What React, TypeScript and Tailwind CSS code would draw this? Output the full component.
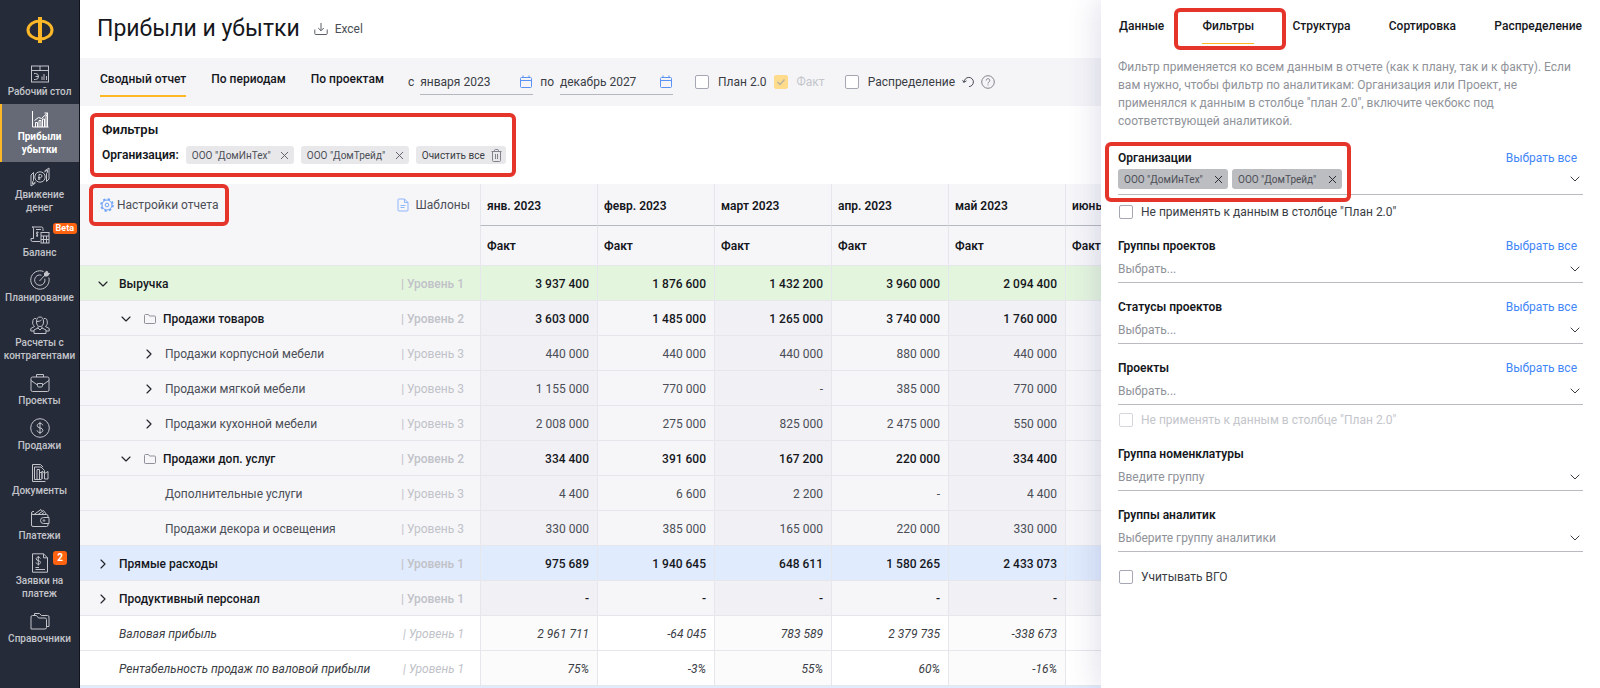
import { useState } from "react";
import type { ReactNode } from "react";
import { ChevronDown, ChevronRight, X } from "lucide-react";

interface MenuItem {
  label: string[];
  icon: ReactNode;
  active?: boolean;
  badge?: string;
}

interface Row {
  title: string;
  level: number;
  values: string[];
  kind: "income" | "group" | "item" | "expense" | "section" | "total";
  open?: boolean;
  folder?: boolean;
  arrow?: boolean;
}

const menu: MenuItem[] = [
  {
    label: ["Рабочий стол"],
    icon: (
      <>
        <rect x="1.5" y="2" width="17" height="16" />
        <path d="M1.5 6.5h17M10 2v4.500M4 9.500h1.500a3 3 0 013 3M4 15.500h1.500a3 3 0 003-3M5.500 12.500h3M12 12.500v3.500M14 10v6M16.500 12v4" />
      </>
    ),
  },
  {
    label: ["Прибыли", "убытки"],
    active: true,
    icon: (
      <>
        <path d="M2.5 2v16h16" />
        <path d="M5.5 18v-4.500h2V18M9 18v-6.500h2V18M12.500 18V10h2v8M16 18V6.500h1.500V18" />
        <path d="M4.5 11.500l4-3 3 1L17.500 4M14.500 4h3v2.500" />
      </>
    ),
  },
  {
    label: ["Движение", "денег"],
    icon: (
      <>
        <circle cx="10" cy="10" r="5.2" />
        <path d="M9 13V7.500h1.500a1.500 1.500 0 010 3H8M8 12h2.500" />
        <path d="M3.500 9v4.500L2.500 15v2l3-2M1 8l2.500-2.500V9M1 8v11l4.500-3M16.500 11V6.500l1-1.500V3l-3 2M19 12l-2.500 2.500V11M19 12V1l-4.500 3" />
      </>
    ),
  },
  {
    label: ["Баланс"],
    badge: "Beta",
    icon: (
      <>
        <path d="M10 16.500H2.500A1.500 1.500 0 011 15v-1.500h2.500V3.500A1.500 1.500 0 002 2h9.500A1.500 1.500 0 0113 3.500V6M3.500 13.500V3.500M6 4.500h5" />
        <path d="M8.500 7.500c-2-.8-3 .8-1.500 1.600s1 2.200-1 1.600M7.200 6.500v5.500" />
        <rect x="11" y="7.500" width="8" height="10.500" />
        <path d="M11 11h8M13.500 11v7M16.500 11v7M11 14.500h8" />
      </>
    ),
  },
  {
    label: ["Планирование"],
    icon: (
      <>
        <path d="M13.500 1.500a9.200 9.200 0 105.300 6" />
        <path d="M11.500 5.200a5.200 5.200 0 103.300 3.500" />
        <path d="M9.500 11l5.500-6" />
        <path d="M14.500 5.500V3l2.500-2 .5 2 2 .5-2 2.500h-3z" fill="currentColor" />
      </>
    ),
  },
  {
    label: ["Расчеты с", "контрагентами"],
    icon: (
      <>
        <path d="M6.500 7c0-3.500 1-5 3.500-5s3.500 1.500 3.500 5c0 3-1.500 4.500-3.500 4.500S6.500 10 6.500 7z" />
        <path d="M8 11.500V13l-4 2v3.500h12V15l-4-2v-1.500M8 13l2 2 2-2" />
        <path d="M6 3.500C4 3 2.500 4.500 2.800 7c-.8 1.500.7 3.500 1.700 4.500L.8 13.500V16H4M14 3.500c2-.5 3.500 1 3.200 3.500.8 1.500-.7 3.500-1.700 4.500l3.700 2V16H16M6.500 6.500c2 0 4-.5 5-1.500" />
      </>
    ),
  },
  {
    label: ["Проекты"],
    icon: (
      <>
        <rect x="1" y="4" width="18" height="14.5" rx="1.5" />
        <path d="M6.500 4V1.500h7V4M1 7.500l6.500 4.500M19 7.500L12.500 12M7.500 10.500h5v2.200a1.300 1.300 0 01-1.300 1.300H8.800a1.300 1.300 0 01-1.300-1.300z" />
      </>
    ),
  },
  {
    label: ["Продажи"],
    icon: (
      <>
        <circle cx="10" cy="10" r="9.3" />
        <path d="M12.800 7.300C12.500 6 11.500 5.500 10 5.500c-1.700 0-2.800.8-2.800 2.100 0 3.100 5.700 1.500 5.700 4.700 0 1.400-1.200 2.200-2.900 2.200-1.600 0-2.800-.8-3-2.200M10 3.800v12.400" />
      </>
    ),
  },
  {
    label: ["Документы"],
    icon: (
      <>
        <path d="M15.500 18.500h-13v-17h8l2.500 2.500M4.500 4v12.500h7M4.500 4h6.500l3.500 3.500V10" />
        <path d="M7 16V6.500h2.500V16M9.500 9.500h2.500V16M12 16V8l2.500 2v6M14.500 10.500l3.500-2V16h-3.500" />
      </>
    ),
  },
  {
    label: ["Платежи"],
    icon: (
      <>
        <path d="M18 9V8a1.500 1.500 0 00-1.500-1.500H3a1.500 1.500 0 010-3h1M1.500 5v12A1.500 1.500 0 003 18.500h13.500A1.500 1.500 0 0018 17v-1.500" />
        <path d="M13.500 9.500h5.500v6h-5.500a3 3 0 010-6z" />
        <circle cx="14" cy="12.5" r=".8" />
        <path d="M4 6.500l7-5 1.500 2M8 6.500l5.500-4 3 4M11.500 6.500l2.500-2" />
      </>
    ),
  },
  {
    label: ["Заявки на", "платеж"],
    badge: "2",
    icon: (
      <>
        <path d="M2.500.8h11l4 4v14.400h-15zM13.500.8v4h4" />
        <path d="M10.500 5.500C10.200 4.600 9.300 4.200 8.300 4.200 7 4.200 6.200 4.900 6.200 5.900c0 2.200 4.300 1.200 4.300 3.500 0 1.100-.9 1.800-2.200 1.800-1.200 0-2-.6-2.300-1.700M8.300 3v9.500M5.500 14.500H9M5.500 16.500h9.500" />
      </>
    ),
  },
  {
    label: ["Справочники"],
    icon: (
      <>
        <path d="M1 18V6a1.500 1.500 0 011.500-1.500h4L8.500 7H15a1.500 1.500 0 011.500 1.500v8A1.500 1.500 0 0115 18z" />
        <path d="M4.500 4.500v-2h5l2 2h6A1.500 1.500 0 0119 6v9.500h-2" />
      </>
    ),
  },
];

const months = ["янв. 2023", "февр. 2023", "март 2023", "апр. 2023", "май 2023", "июнь 2023"];

const rows: Row[] = [
  { title: "Выручка", level: 1, kind: "income", arrow: true, open: true, values: ["3 937 400", "1 876 600", "1 432 200", "3 960 000", "2 094 400", ""] },
  { title: "Продажи товаров", level: 2, kind: "group", arrow: true, open: true, folder: true, values: ["3 603 000", "1 485 000", "1 265 000", "3 740 000", "1 760 000", ""] },
  { title: "Продажи корпусной мебели", level: 3, kind: "item", arrow: true, values: ["440 000", "440 000", "440 000", "880 000", "440 000", ""] },
  { title: "Продажи мягкой мебели", level: 3, kind: "item", arrow: true, values: ["1 155 000", "770 000", "-", "385 000", "770 000", ""] },
  { title: "Продажи кухонной мебели", level: 3, kind: "item", arrow: true, values: ["2 008 000", "275 000", "825 000", "2 475 000", "550 000", ""] },
  { title: "Продажи доп. услуг", level: 2, kind: "group", arrow: true, open: true, folder: true, values: ["334 400", "391 600", "167 200", "220 000", "334 400", ""] },
  { title: "Дополнительные услуги", level: 3, kind: "item", values: ["4 400", "6 600", "2 200", "-", "4 400", ""] },
  { title: "Продажи декора и освещения", level: 3, kind: "item", values: ["330 000", "385 000", "165 000", "220 000", "330 000", ""] },
  { title: "Прямые расходы", level: 1, kind: "expense", arrow: true, values: ["975 689", "1 940 645", "648 611", "1 580 265", "2 433 073", ""] },
  { title: "Продуктивный персонал", level: 1, kind: "section", arrow: true, values: ["-", "-", "-", "-", "-", ""] },
  { title: "Валовая прибыль", level: 1, kind: "total", values: ["2 961 711", "-64 045", "783 589", "2 379 735", "-338 673", ""] },
  { title: "Рентабельность продаж по валовой прибыли", level: 1, kind: "total", values: ["75%", "-3%", "55%", "60%", "-16%", ""] },
];

const rowStyle = {
  income: "bg-[#e4f5de] font-medium text-[#15171c]",
  group: "bg-[#f6f6f9] font-medium text-[#15171c]",
  item: "bg-[#f6f6f9] text-[#4b4e56]",
  expense: "bg-[#e0ebfd] font-medium text-[#15171c]",
  section: "bg-[#f6f6f9] font-medium text-[#15171c]",
  total: "bg-white italic text-[#3a3d44]",
};

const stripe = {
  income: "",
  group: "bg-[#f0f0f5]",
  item: "bg-[#f0f0f5]",
  expense: "",
  section: "bg-[#f0f0f5]",
  total: "bg-[#fbfbfc]",
};

const indent: Record<number, string> = { 1: "pl-[14px]", 2: "pl-[37px]", 3: "pl-[60px]" };

function Highlight({ className }: { className: string }) {
  return <span aria-hidden="true" className={`pointer-events-none absolute z-10 rounded-md border-4 border-[#e5352b] ${className}`} />;
}

function Check({ label, checked = false, disabled = false, className = "" }: { label: string; checked?: boolean; disabled?: boolean; className?: string }) {
  const [on, setOn] = useState(checked);
  return (
    <label className={`flex items-center ${disabled ? "text-[#c3c5cb]" : "text-[#3a3d44]"} ${className}`}>
      <span className="relative flex">
        <input
          type="checkbox"
          checked={on}
          disabled={disabled}
          onChange={(e) => setOn(e.target.checked)}
          className="size-[14px] appearance-none rounded-[2px] border border-[#a5a8b2] bg-white checked:border-[#ffdc8c] checked:bg-[#ffdc8c] disabled:border-[#d5d7dc] disabled:checked:border-[#ffdc8c]"
        />
        {on && (
          <svg viewBox="0 0 14 14" className="pointer-events-none absolute inset-0 size-[14px]" fill="none" stroke="#b9b3a3" strokeWidth="1.5">
            <path d="M3.500 7l2.500 2.500 4.500-5" />
          </svg>
        )}
      </span>
      {label}
    </label>
  );
}

function Chip({ name, dark = false }: { name: string; dark?: boolean }) {
  return (
    <span className={`flex items-center justify-between whitespace-nowrap rounded-[3px] pl-[6px] pr-[3px] text-[10px] text-[#4b4e56] ${dark ? "h-5 w-[110px] bg-[#bcbdc1]" : "h-[18px] w-[108px] bg-[#e8e8eb]"}`}>
      {name}
      <button type="button" aria-label={`Убрать ${name}`} className={dark ? "text-[#22252c]" : "text-[#5b5e66]"}>
        <X size={13} strokeWidth={1.75} />
      </button>
    </span>
  );
}

function DateField({ label, value }: { label: string; value: string }) {
  return (
    <label className="flex items-center gap-[6px] text-[#3a3d44]">
      {label}
      <span className="flex h-[26px] w-[113px] items-center border-b border-[#b5b8bf]">
        <input defaultValue={value} className="w-full min-w-0 flex-1 bg-transparent outline-none" />
        <svg viewBox="0 0 14 14" className="size-[14px] shrink-0" fill="none" stroke="#5b93f5">
          <rect x="1.5" y="2.5" width="11" height="10" rx="1" />
          <path d="M1.500 5.500h11M4 .5v2M10 .5v2" />
        </svg>
      </span>
    </label>
  );
}

function Field({ id, label, placeholder, selectAll = true }: { id: string; label: string; placeholder: string; selectAll?: boolean }) {
  return (
    <div>
      <div className="flex h-[18px] items-center justify-between pr-[6px]">
        <label htmlFor={id} className="font-semibold text-[#15171c]">{label}</label>
        {selectAll && <button type="button" className="text-[#3f86f8]">Выбрать все</button>}
      </div>
      <div className="relative">
        <select id={id} className="h-[28px] w-full appearance-none border-b border-[#b9bbc0] bg-transparent text-[#8f9299] outline-none">
          <option>{placeholder}</option>
        </select>
        <ChevronDown size={16} strokeWidth={1.5} className="pointer-events-none absolute right-0 top-[6px] text-[#3a3d44]" />
      </div>
    </div>
  );
}

function Sidebar() {
  return (
    <nav className="w-20 shrink-0 border-r border-[#11141d] bg-[#262b39] text-[10px] leading-[13px] text-[#c2c4ca]">
      <a href="#" aria-label="Главная" className="flex h-[59px] items-center justify-center">
        <svg viewBox="0 0 28 28" className="size-[28px]" fill="none" stroke="#fdb827" strokeWidth="3">
          <ellipse cx="14" cy="14" rx="12" ry="9" />
          <path d="M14 1v26" strokeWidth="4" />
        </svg>
      </a>
      {menu.map((item) => (
        <a
          key={item.label[0]}
          href="#"
          className={`relative flex flex-col items-center pb-[6px] pt-[5px] text-center ${item.active ? "bg-[#666a76] font-bold text-white" : "font-medium"}`}
        >
          {item.active && <span className="absolute inset-y-0 left-0 w-[2px] bg-[#fdb827]" />}
          <svg viewBox="0 0 20 20" className="mb-px size-5" fill="none" stroke="currentColor" strokeWidth="1">
            {item.icon}
          </svg>
          {item.label.map((line) => (
            <span key={line} className="whitespace-nowrap">{line}</span>
          ))}
          {item.badge === "Beta" && (
            <span className="absolute right-[2px] top-[3px] h-[11px] rounded-[3px] bg-[#ff6310] px-[3px] text-[9px] font-bold leading-[11px] text-white">Beta</span>
          )}
          {item.badge === "2" && (
            <span className="absolute right-[12px] top-[3px] size-[14px] rounded-[3px] bg-[#ff6310] font-bold leading-[14px] text-white">2</span>
          )}
        </a>
      ))}
    </nav>
  );
}

function Toolbar() {
  const tabs = ["Сводный отчет", "По периодам", "По проектам"];
  const [tab, setTab] = useState(tabs[0]);
  return (
    <div className="flex h-12 items-center whitespace-nowrap bg-[#f5f5f8] pl-5">
      <div className="flex gap-[25px]">
        {tabs.map((t) => (
          <button
            key={t}
            type="button"
            onClick={() => setTab(t)}
            className={`h-[30px] border-b-2 pb-1 font-medium text-[#15171c] ${t === tab ? "border-[#fdb827]" : "border-transparent"}`}
          >
            {t}
          </button>
        ))}
      </div>
      <div className="ml-6 flex gap-[7px]">
        <DateField label="с" value="января 2023" />
        <DateField label="по" value="декабрь 2027" />
      </div>
      <Check label="План 2.0" className="ml-[22px] gap-[9px]" />
      <Check label="Факт" checked disabled className="ml-[7px] gap-[9px]" />
      <Check label="Распределение" className="ml-5 gap-[9px]" />
      <button type="button" aria-label="Сбросить" className="ml-[7px]">
        <svg viewBox="0 0 12 12" className="size-3" fill="none" stroke="#4b4e56">
          <path d="M.8 6h1.400A4.600 4.600 0 117 10.600M.5 4.200L2.200 6.200 4.500 4.800" />
        </svg>
      </button>
      <button type="button" aria-label="Справка" className="ml-[7px]">
        <svg viewBox="0 0 14 14" className="size-[14px]" fill="none" stroke="#80838b">
          <circle cx="7" cy="7" r="6.3" />
          <path d="M5.200 5.500a1.800 1.800 0 113 1.300c-.8.600-1.200.9-1.200 1.700M7 9.500v1" />
        </svg>
      </button>
    </div>
  );
}

function ReportTable() {
  return (
    <table className="w-[1102px] table-fixed border-separate border-spacing-0">
      <colgroup>
        <col className="w-[400px]" />
        {months.map((m) => <col key={m} className="w-[117px]" />)}
      </colgroup>
      <thead className="bg-[#f6f6f9] text-left">
        <tr className="h-[42px]">
          <th rowSpan={2} className="border-b border-[#e6e7ec] py-3 pl-5 pr-[10px] align-top font-normal text-[#4b4e56]">
            <div className="flex h-[18px] items-center justify-between">
              <button type="button" className="relative flex h-[18px] items-center gap-[3px]">
                <svg viewBox="0 0 14 14" className="size-[14px]" fill="none" stroke="#6ba0f7">
                  <circle cx="7" cy="7" r="5" />
                  <circle cx="7" cy="7" r="1.8" />
                  <circle cx="7" cy="7" r="6" strokeDasharray="2.35 2.36" strokeWidth="1.5" />
                </svg>
                Настройки отчета
                <Highlight className="-inset-y-3 -left-[11px] -right-[10px]" />
              </button>
              <button type="button" className="flex items-center gap-[7px]">
                <svg viewBox="0 0 12 14" className="h-[14px] w-3" fill="none" stroke="#8db6fa">
                  <path d="M1 2a1 1 0 011-1h5.500L11 4.500V12a1 1 0 01-1 1H2a1 1 0 01-1-1zM7.500 1v3.500H11M3.500 7.500h5M3.500 9.500h4" />
                </svg>
                Шаблоны
              </button>
            </div>
          </th>
          {months.map((m) => (
            <th key={m} className="whitespace-nowrap border-b border-l border-b-[#b5b8bf] border-l-[#e6e7ec] pl-[6px] pt-[2px] font-semibold text-[#15171c]">{m}</th>
          ))}
        </tr>
        <tr className="h-10">
          {months.map((m) => (
            <th key={m} className="border-b border-l border-[#e6e7ec] pl-[6px] font-semibold text-[#15171c]">Факт</th>
          ))}
        </tr>
      </thead>
      <tbody>
        {rows.map((row) => (
          <tr key={row.title} className={`h-[35px] ${rowStyle[row.kind]}`}>
            <td className={`border-b border-[#e6e7ec] pr-4 pt-[2px] ${indent[row.level]}`}>
              <div className="flex items-center">
                <span className="flex w-[25px] shrink-0 pl-px text-[#22252c]">
                  {row.arrow && (row.open ? <ChevronDown size={16} strokeWidth={1.75} /> : <ChevronRight size={16} strokeWidth={1.75} />)}
                </span>
                {row.folder && (
                  <svg viewBox="0 0 12 10" className="ml-[2px] mr-[7px] h-[10px] w-3 shrink-0" fill="none" stroke="#8f9299">
                    <path d="M.5 9V1.500a1 1 0 011-1h3L5.500 2h5a1 1 0 011 1v5.500a1 1 0 01-1 1h-9a1 1 0 01-1-1z" />
                  </svg>
                )}
                <span className="flex-1 whitespace-nowrap">{row.title}</span>
                <span className="text-[#c0c2c8]">| Уровень {row.level}</span>
              </div>
            </td>
            {row.values.map((v, i) => (
              <td key={i} className={`border-b border-l border-[#e6e7ec] pr-2 pt-[2px] text-right ${i % 2 === 0 && i < 5 ? stripe[row.kind] : ""}`}>{v}</td>
            ))}
          </tr>
        ))}
        <tr className="h-[35px] bg-[#e0ebfd]">
          <td colSpan={7} />
        </tr>
      </tbody>
    </table>
  );
}

function FilterPanel() {
  const tabs = ["Данные", "Фильтры", "Структура", "Сортировка", "Распределение"];
  const [tab, setTab] = useState("Фильтры");
  return (
    <aside className="relative z-20 w-[499px] shrink-0 bg-white px-[17px] pt-[17px] shadow-[-4px_0_28px_rgba(60,60,130,0.16)]">
      <div className="flex justify-between px-px">
        {tabs.map((t) => (
          <button
            key={t}
            type="button"
            onClick={() => setTab(t)}
            className={`relative h-[27px] border-b pb-2 font-medium leading-[18px] text-[#15171c] ${t === tab ? "border-[#fdb827]" : "border-transparent"}`}
          >
            {t}
            {t === "Фильтры" && <Highlight className="-bottom-[7px] -left-7 -right-8 -top-[9px]" />}
          </button>
        ))}
      </div>
      <p className="mt-[14px] max-w-[455px] leading-[18px] text-[#8f9299]">
        Фильтр применяется ко всем данным в отчете (как к плану, так и к факту). Если вам нужно, чтобы фильтр по аналитикам: Организация или Проект, не применялся к данным в столбце "план 2.0", включите чекбокс под соответствующей аналитикой.
      </p>
      <div className="mt-[19px] flex flex-col gap-[15px]">
        <div>
          <div className="relative">
            <div className="flex h-[18px] items-center justify-between pr-[6px]">
              <span className="font-semibold text-[#15171c]">Организации</span>
              <button type="button" className="text-[#3f86f8]">Выбрать все</button>
            </div>
            <div className="flex h-[28px] items-center gap-1 border-b border-[#b9bbc0] pb-[3px]">
              <Chip name={'ООО "ДомИнТех"'} dark />
              <Chip name={'ООО "ДомТрейд"'} dark />
              <button type="button" aria-label="Открыть список" className="ml-auto">
                <ChevronDown size={16} strokeWidth={1.5} className="text-[#3a3d44]" />
              </button>
            </div>
            <Highlight className="-left-[13px] -top-[7px] h-[60px] w-[246px]" />
          </div>
          <Check label={'Не применять к данным в столбце "План 2.0"'} className="mt-[7px] h-5 gap-2 pl-px" />
        </div>
        <Field id="groups" label="Группы проектов" placeholder="Выбрать..." />
        <Field id="statuses" label="Статусы проектов" placeholder="Выбрать..." />
        <div>
          <Field id="projects" label="Проекты" placeholder="Выбрать..." />
          <Check label={'Не применять к данным в столбце "План 2.0"'} disabled className="mt-[5px] h-5 gap-2 pl-px" />
        </div>
        <Field id="nomenclature" label="Группа номенклатуры" placeholder="Введите группу" selectAll={false} />
        <Field id="analytics" label="Группы аналитик" placeholder="Выберите группу аналитики" selectAll={false} />
        <Check label="Учитывать ВГО" className="h-5 gap-2 pl-px" />
      </div>
    </aside>
  );
}

export default function App() {
  return (
    <div className="flex h-screen overflow-hidden bg-white font-['Roboto','Liberation_Sans',sans-serif] text-[12px]">
      <Sidebar />
      <main className="min-w-0 flex-1 overflow-hidden">
        <header className="flex h-[58px] items-center gap-[14px] pl-[17px]">
          <h1 className="text-[23px] text-[#15171c]">Прибыли и убытки</h1>
          <button type="button" className="flex items-center gap-[7px] text-[#4b4e56]">
            <svg viewBox="0 0 14 14" className="size-[14px]" fill="none" stroke="#5b5e66">
              <path d="M.8 7.500v4a1 1 0 001 1h10.400a1 1 0 001-1v-4M7 1v7.500M4.200 6L7 8.800 9.800 6" />
            </svg>
            Excel
          </button>
        </header>
        <Toolbar />
        <section className="pb-5 pl-[22px] pt-[15px]">
          <div className="relative w-fit">
            <h2 className="mb-[7px] text-[13px] font-semibold leading-[18px] text-[#15171c]">Фильтры</h2>
            <div className="flex items-center gap-[7px]">
              <span className="font-semibold text-[#15171c]">Организация:</span>
              <Chip name={'ООО "ДомИнТех"'} />
              <Chip name={'ООО "ДомТрейд"'} />
              <button type="button" className="flex h-[18px] items-center gap-[6px] rounded-[3px] bg-[#e8e8eb] pl-[6px] pr-1 text-[10px] text-[#3a3d44]">
                Очистить все
                <svg viewBox="0 0 11 13" className="h-[13px] w-[11px]" fill="none" stroke="#80838b">
                  <path d="M.5 2.500h10M3.500 2.500v-1a1 1 0 011-1h2a1 1 0 011 1v1M1.500 2.500v9a1 1 0 001 1h6a1 1 0 001-1v-9M4.500 5v5M6.500 5v5" />
                </svg>
              </button>
            </div>
            <Highlight className="-bottom-[13px] -left-3 -right-[10px] -top-2" />
          </div>
        </section>
        <ReportTable />
      </main>
      <FilterPanel />
    </div>
  );
}
